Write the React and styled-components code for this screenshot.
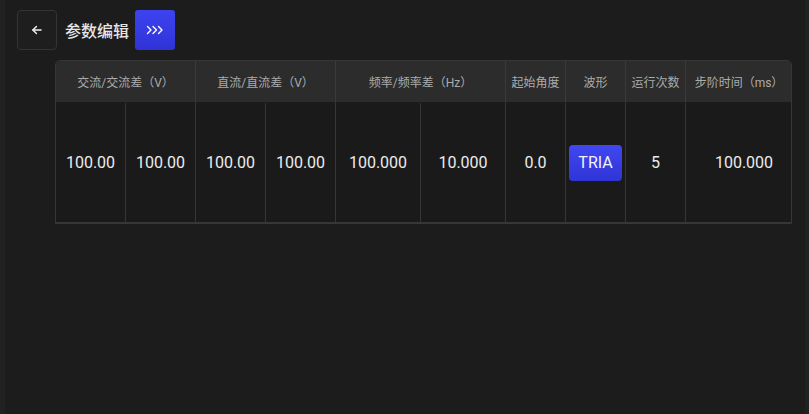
import React from "react";
import styled, { createGlobalStyle } from "styled-components";

const Global = createGlobalStyle`
  html, body { margin: 0; padding: 0; background: #1c1c1c; }
  body { font-family: Roboto, "Noto Sans CJK SC", sans-serif; }
  * { box-sizing: border-box; }
`;

const Frame = styled.div`
  width: 809px;
  height: 414px;
  background: #1c1c1c;
  border-left: 5px solid #212121;
  border-right: 4px solid #212121;
  padding: 10px 13px 0 12px;
  display: flex;
  flex-direction: column;
  gap: 10px;
`;

const TopBar = styled.div`
  display: flex;
  align-items: center;
  gap: 8px;
  height: 40px;
`;

const BackButton = styled.button`
  width: 40px;
  height: 40px;
  border: 1px solid #343434;
  border-radius: 4px;
  background: #1e1e1e;
  color: #f0f0f0;
  display: flex;
  align-items: center;
  justify-content: center;
  padding: 0;
`;

const Title = styled.div`
  font-family: "Noto Sans CJK SC", sans-serif;
  font-size: 16px;
  font-weight: 500;
  color: #e6e6e6;
`;

const BlueButton = styled.button`
  width: 40px;
  height: 40px;
  border: none;
  border-radius: 3px;
  background: linear-gradient(180deg, #3d43f0 0%, #2f33d6 100%);
  display: flex;
  align-items: center;
  justify-content: center;
  padding: 0;
  margin-left: -2px;
`;

const TableWrap = styled.div`
  margin-left: 38px;
  width: 737px;
  border: 1px solid #363636;
  border-radius: 5px 5px 0 0;
  overflow: hidden;
`;

const Table = styled.table`
  width: 100%;
  border-collapse: separate;
  border-spacing: 0;
  table-layout: fixed;
`;

const Th = styled.th`
  height: 42px;
  background: #2c2c2c;
  color: #ababab;
  font-family: Roboto, "Noto Sans CJK SC", sans-serif;
  font-size: 12px;
  font-weight: 400;
  text-align: center;
  padding: 0;
  border-bottom: 1px solid #1c1c1c;
  border-right: 1px solid ${(p) => (p.$last ? "transparent" : "#3a3a3a")};
  white-space: nowrap;
`;

const Td = styled.td`
  height: 120px;
  background: #1a1a1a;
  color: #ececec;
  font-size: 16px;
  text-align: center;
  padding: 0;
  padding-left: ${(p) => (p.$padLeft ? "10px" : "0")};
  border-right: 1px solid ${(p) => (p.$last ? "transparent" : "#363636")};
  border-bottom: 1px solid #363636;
`;

const WaveButton = styled.button`
  width: 53px;
  height: 36px;
  border: none;
  border-radius: 4px;
  background: linear-gradient(180deg, #4147f2 0%, #2f34d4 100%);
  color: #f2f2ff;
  font-family: Roboto, sans-serif;
  font-size: 16px;
  padding: 0;
`;

const cols = [70, 70, 70, 70, 85, 85, 60, 60, 60, 107];

const values = ["100.00", "100.00", "100.00", "100.00", "100.000", "10.000", "0.0"];

export default function App() {
  return (
    <>
      <Global />
      <Frame>
        <TopBar>
          <BackButton>
            <svg width="14" height="14" viewBox="0 0 24 24" fill="none" stroke="currentColor" strokeWidth="2.6" strokeLinecap="round" strokeLinejoin="round">
              <path d="M19 12H5" />
              <path d="M11 6l-6 6 6 6" />
            </svg>
          </BackButton>
          <Title>参数编辑</Title>
          <BlueButton>
            <svg width="18" height="10" viewBox="0 0 18 10" fill="none" stroke="#ffffff" strokeWidth="1.4" strokeLinecap="round" strokeLinejoin="round">
              <path d="M1.5 1.5L5 5L1.5 8.5" />
              <path d="M7 1.5L10.5 5L7 8.5" />
              <path d="M12.5 1.5L16 5L12.5 8.5" />
            </svg>
          </BlueButton>
        </TopBar>
        <TableWrap>
          <Table>
            <colgroup>
              {cols.map((w, i) => (
                <col key={i} style={{ width: w }} />
              ))}
            </colgroup>
            <thead>
              <tr>
                <Th colSpan={2}>交流/交流差（V）</Th>
                <Th colSpan={2}>直流/直流差（V）</Th>
                <Th colSpan={2}>频率/频率差（Hz）</Th>
                <Th>起始角度</Th>
                <Th>波形</Th>
                <Th>运行次数</Th>
                <Th $last>步阶时间（ms）</Th>
              </tr>
            </thead>
            <tbody>
              <tr>
                {values.map((v, i) => (
                  <Td key={i}>{v}</Td>
                ))}
                <Td>
                  <WaveButton>TRIA</WaveButton>
                </Td>
                <Td>5</Td>
                <Td $last $padLeft>100.000</Td>
              </tr>
            </tbody>
          </Table>
        </TableWrap>
      </Frame>
    </>
  );
}
